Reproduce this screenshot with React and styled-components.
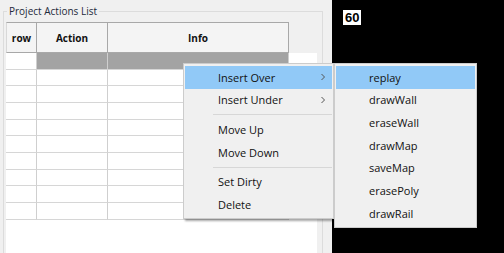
import React from 'react'
import styled, { createGlobalStyle } from 'styled-components'

const GlobalStyle = createGlobalStyle`
  html, body {
    margin: 0;
    padding: 0;
    background: #f0f0f0;
    font-family: "Open Sans", "Noto Sans", sans-serif;
    overflow: hidden;
  }
`

const columns = [
  { key: 'row', title: 'row', width: 31 },
  { key: 'action', title: 'Action', width: 71 },
  { key: 'info', title: 'Info', width: 181 },
]

const rowCount = 10

const mainItems = [
  { label: 'Insert Over', sub: true, active: true },
  { label: 'Insert Under', sub: true },
  { sep: true },
  { label: 'Move Up' },
  { label: 'Move Down' },
  { sep: true },
  { label: 'Set Dirty' },
  { label: 'Delete' },
]

const subItems = ['replay', 'drawWall', 'eraseWall', 'drawMap', 'saveMap', 'erasePoly', 'drawRail']

function Chevron() {
  return (
    <svg width="6" height="8" viewBox="0 0 6 8">
      <path d="M1.5 1 L4.5 4 L1.5 7" fill="none" stroke="#555" strokeWidth="1" />
    </svg>
  )
}

function App() {
  return (
    <Page>
      <GlobalStyle />
      <LeftPanel>
        <GroupBox>
          <Legend>Project Actions List</Legend>
          <Grid>
            <HeaderRow>
              {columns.map(col => (
                <HeaderCell key={col.key} w={col.width}>{col.title}</HeaderCell>
              ))}
            </HeaderRow>
            {Array.from({ length: rowCount }).map((_, i) => (
              <Row key={i}>
                {columns.map((col, c) => (
                  <Cell key={col.key} w={col.width} selected={i === 0 && c > 0} />
                ))}
              </Row>
            ))}
          </Grid>
        </GroupBox>
      </LeftPanel>
      <Canvas>
        <FpsBox>60</FpsBox>
      </Canvas>

      <Menu left={183} top={63} width={151}>
        {mainItems.map((item, i) =>
          item.sep ? (
            <Separator key={i} />
          ) : (
            <MenuItem key={i} active={item.active} indent={33}>
              <span>{item.label}</span>
              {item.sub && <Arrow><Chevron /></Arrow>}
            </MenuItem>
          )
        )}
      </Menu>

      <Menu left={334} top={63} width={143} noShadow>
        {subItems.map((label, i) => (
          <MenuItem key={label} active={i === 0} indent={33}>
            <span>{label}</span>
          </MenuItem>
        ))}
      </Menu>
    </Page>
  )
}

export default App

const Page = styled.div`
  position: relative;
  display: flex;
  width: 504px;
  height: 253px;
  overflow: hidden;
`

const LeftPanel = styled.div`
  width: 332px;
  flex-shrink: 0;
  padding: 5px 0 0 3px;
  box-sizing: border-box;
  background: #f0f0f0;
`

const GroupBox = styled.fieldset`
  margin: 0;
  width: 320px;
  height: 300px;
  box-sizing: border-box;
  padding: 4px 5px 0 2px;
  border: 1px solid #dcdcdc;
`

const Legend = styled.legend`
  font-size: 10px;
  line-height: 13px;
  color: #1e2a3a;
  padding: 0 2px;
  margin-left: 1px;
`

const Grid = styled.div`
  background: #ffffff;
  height: 260px;
`

const HeaderRow = styled.div`
  display: flex;
  height: 31px;
  background: #f0f0f0;
`

const HeaderCell = styled.div`
  width: ${p => p.w}px;
  box-sizing: border-box;
  display: flex;
  align-items: center;
  justify-content: center;
  font-size: 10px;
  font-weight: 700;
  color: #111;
  background: #f4f4f4;
  border-top: 1px solid #a8a8a8;
  border-bottom: 1px solid #a8a8a8;
  border-right: 1px solid #a8a8a8;
  &:first-child {
    border-left: 1px solid #d8d8d8;
  }
`

const Row = styled.div`
  display: flex;
  height: 16.67px;
`

const Cell = styled.div`
  width: ${p => p.w}px;
  box-sizing: border-box;
  background: ${p => (p.selected ? '#a3a3a3' : '#ffffff')};
  border-right: 1px solid #cfcfcf;
  border-bottom: 1px solid #d6d6d6;
`

const Canvas = styled.div`
  flex: 1;
  background: #000000;
  padding: 5px 0 0 11px;
`

const FpsBox = styled.div`
  display: inline-block;
  background: #ffffff;
  color: #000;
  font-family: "Liberation Sans", Arial, sans-serif;
  font-weight: 700;
  font-size: 13px;
  line-height: 15px;
  padding: 0 2px;
`

const Menu = styled.div`
  position: absolute;
  left: ${p => p.left}px;
  top: ${p => p.top}px;
  width: ${p => p.width}px;
  box-sizing: border-box;
  padding: 2px 1px;
  background: #f0f0f0;
  border: 1px solid #cccccc;
  box-shadow: ${p => (p.noShadow ? 'none' : '2px 2px 2px rgba(0, 0, 0, 0.35)')};
`

const MenuItem = styled.div`
  position: relative;
  display: flex;
  align-items: center;
  height: 22.67px;
  padding-left: ${p => p.indent}px;
  background: ${p => (p.active ? '#91c9f7' : 'transparent')};
  font-size: 11px;
  color: #111;
`

const Arrow = styled.span`
  position: absolute;
  right: 6px;
  top: 7px;
  display: flex;
`

const Separator = styled.div`
  height: 7px;
  display: flex;
  align-items: center;
  padding-left: 28px;
  &::after {
    content: '';
    flex: 1;
    height: 1px;
    background: #d7d7d7;
  }
`
